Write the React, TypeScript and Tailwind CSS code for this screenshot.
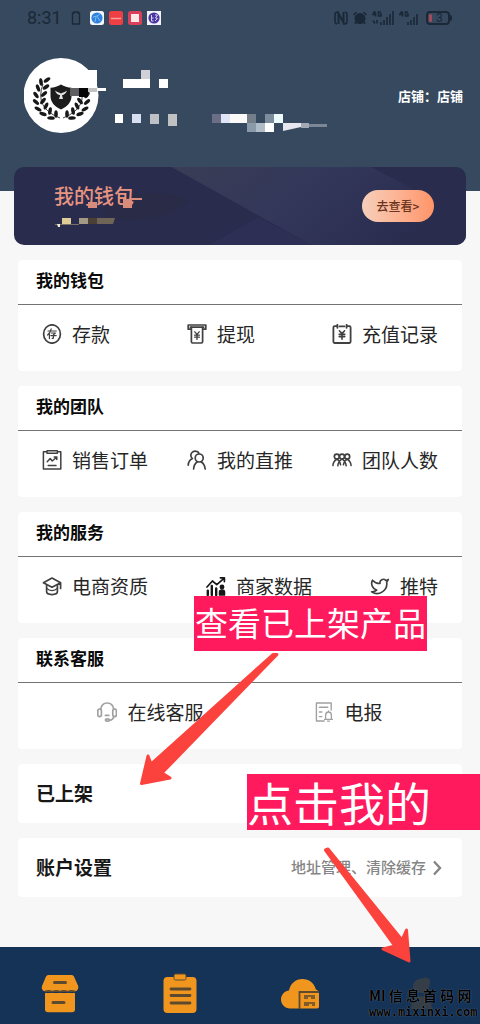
import type { ReactNode } from 'react'
import { AlarmClock, Twitter } from 'lucide-react'

interface MenuItem {
  label: string
  icon: ReactNode
}

interface MenuSection {
  title: string
  align: string
  items: MenuItem[]
}

interface IconProps {
  children: ReactNode
  className?: string
}

function Icon({ children, className = 'text-neutral-700' }: IconProps) {
  return (
    <svg
      viewBox="0 0 20 20"
      fill="none"
      stroke="currentColor"
      strokeWidth="1.7"
      strokeLinecap="round"
      strokeLinejoin="round"
      aria-hidden="true"
      className={`size-5 shrink-0 ${className}`}
    >
      {children}
    </svg>
  )
}

const sections: MenuSection[] = [
  {
    title: '我的钱包',
    align: 'justify-between',
    items: [
      {
        label: '存款',
        icon: (
          <Icon>
            <ellipse cx="10" cy="10" rx="8.4" ry="9.2" />
            <path d="M6 7h8.3M9.2 4.8C8.6 7.6 7.4 9.4 5.6 11M7.4 9.6v5M9.4 9h4l-2 1.8v3.4l-1.2.2M8.8 11.6h5.4" strokeWidth="1.2" />
          </Icon>
        ),
      },
      {
        label: '提现',
        icon: (
          <Icon>
            <path d="M3.6 5.2H1.2V1h17.6v4.2h-2.4M3.4 3.2h13.2" />
            <path d="M4.4 3.4v14.4c0 .8.4 1.2 1.2 1.2h8.8c.8 0 1.2-.4 1.2-1.2V3.4" />
            <path d="M7.8 7.8L10 10.4l2.2-2.6M10 10.4v5M7.6 11.2h4.8M7.6 13.2h4.8" strokeWidth="1.3" />
          </Icon>
        ),
      },
      {
        label: '充值记录',
        icon: (
          <Icon>
            <path d="M5 2.2H2.6c-.8 0-1.2.4-1.2 1.2v14.4c0 .8.4 1.2 1.2 1.2h14.8c.8 0 1.2-.4 1.2-1.2V3.4c0-.8-.4-1.2-1.2-1.2H15M5.4.8v3M14.6.8v3M7.6 2.4h4.8" strokeWidth="1.8" />
            <path d="M7.4 6.8L10 9.6l2.6-2.8M10 9.6v5.6M7.2 10.4h5.6M7.2 12.6h5.6" strokeWidth="1.6" />
          </Icon>
        ),
      },
    ],
  },
  {
    title: '我的团队',
    align: 'justify-between',
    items: [
      {
        label: '销售订单',
        icon: (
          <Icon>
            <path d="M4.6 1.8H1.4V19h17.4V1.8h-3.2" strokeWidth="1.5" />
            <path d="M5 .8h10.4v2.4H5z" strokeWidth="1.4" />
            <path d="M5.2 11.8l3-3.2 2 2.4 4.4-3.8M12.2 7h2.6v2.4M6.2 15.6h7.8" strokeWidth="1.5" />
          </Icon>
        ),
      },
      {
        label: '我的直推',
        icon: (
          <Icon>
            <circle cx="12.2" cy="8" r="4" />
            <path d="M6.6 19c.2-3.6 1.6-5.8 3.8-7.2M14 11.8c2.4 1.4 3.8 3.6 4.2 7.2" />
            <path d="M9.8 1.6C7.4.4 4 1.8 3.8 5c0 1.6.6 2.8 1.6 3.6C3 9.8 1.4 12 1.2 15.2M10.2 1.6c.8.4 1.2.8 1.6 1.6" />
          </Icon>
        ),
      },
      {
        label: '团队人数',
        icon: (
          <Icon>
            <circle cx="4.8" cy="6.6" r="2.5" />
            <circle cx="10" cy="6.6" r="2.5" />
            <circle cx="15.2" cy="6.6" r="2.5" />
            <path d="M.9 15.6c.3-3 1.4-5.2 3.9-6.4 2 1 3.4 2.8 3.8 5.6M5.8 15.8c.4-3.2 1.8-5.4 4.2-6.6 2.4 1.2 3.8 3.4 4.2 6.6M11.4 14.8c.4-2.8 1.8-4.6 3.8-5.6 2.5 1.2 3.6 3.4 3.9 6.4" strokeWidth="1.5" />
          </Icon>
        ),
      },
    ],
  },
  {
    title: '我的服务',
    align: 'justify-between',
    items: [
      {
        label: '电商资质',
        icon: (
          <Icon>
            <path d="M1.4 6.8L10 2l8.600 4.800L10 11.200zM18.600 6.800v5.600" />
            <path d="M4.600 9.400v6.200c0 1.800 2.400 3 5.400 3s5.400-1.200 5.400-3V9.400" />
            <path d="M4.800 12.400c1.400 1.600 3.200 2.200 5.200 2.200s3.800-.6 5.200-2.200" strokeWidth="1.300" />
          </Icon>
        ),
      },
      {
        label: '商家数据',
        icon: (
          <Icon className="text-neutral-900">
            <path d="M1 11l5.4-6 4.4 3.6L18 2.4M14.4 1.8h4v3.8" strokeWidth="1.7" />
            <path d="M1.8 19v-4.4M5.8 19V10M10.2 19v-6.6" strokeWidth="2.4" />
            <circle cx="16" cy="11" r="1.6" fill="currentColor" />
            <path d="M13.6 19v-3c0-1 1-2 2.4-2s2.4 1 2.4 2v3z" fill="currentColor" />
          </Icon>
        ),
      },
      {
        label: '推特',
        icon: <Twitter className="size-5 shrink-0 text-neutral-700" strokeWidth={2} />,
      },
    ],
  },
  {
    title: '联系客服',
    align: 'justify-around',
    items: [
      {
        label: '在线客服',
        icon: (
          <Icon className="text-neutral-400">
            <path d="M3.6 7.4C4.2 3.6 6.6 1 10.2 1s6 2.6 6.6 6.4M16.8 14.4c-.4 2.4-2 3.8-4.4 4" />
            <rect x=".8" y="7" width="3.6" height="7.6" rx="1.8" />
            <rect x="15.8" y="7" width="3.6" height="7.6" rx="1.8" />
            <ellipse cx="10.4" cy="18" rx="2" ry="1.2" />
            <path d="M8.4 13.4h3.4" />
          </Icon>
        ),
      },
      {
        label: '电报',
        icon: (
          <Icon className="text-neutral-400">
            <path d="M10.2 19H2.4V1h14.8v7M5.4 5.2h8.4M5.4 10h2.4M5.4 14.6h2.4" strokeWidth="1.4" />
            <path d="M10.6 17.4h7.8M11.6 17.2v-4c0-1.8 1.2-3.2 2.9-3.2s2.9 1.4 2.9 3.2v4M13.6 19.2h1.8M14.5 9v1" strokeWidth="1.3" />
          </Icon>
        ),
      },
    ],
  },
]

const tabs = [
  {
    label: '店铺',
    icon: (
      <svg viewBox="0 0 38 38" className="size-[38px]" aria-hidden="true">
        <path d="M8 0h22c1.600 0 2.600.6 3.200 2l4 9c.6 3-1 5.400-4 5.400H5c-3.200 0-4.800-2.400-4-5.400l3.800-9C5.400.6 6.400 0 8 0z" fill="#f0961f" />
        <path d="M4 18h30v16c0 2.200-1 3.200-3.200 3.200H7.200C5 37.200 4 36.200 4 34z" fill="#f0961f" />
        <path d="M13.500 7.500h11M12 27.500h11" stroke="#5c4a30" strokeWidth="3" strokeLinecap="round" />
        <path d="M4 16.600q4-1.600 7.500.2q4-1.800 7.500 0q4-1.800 7.500 0q4-1.800 7.500-.2" fill="none" stroke="#5c4a30" strokeWidth="1.600" />
      </svg>
    ),
  },
  {
    label: '订单',
    icon: (
      <svg viewBox="0 0 38 38" className="size-[38px] overflow-visible" aria-hidden="true">
        <rect x="2.500" y="2" width="33" height="36" rx="4" fill="#f0961f" />
        <rect x="13" y="-1" width="12" height="6" rx="1.500" fill="#f0961f" stroke="#5c4a30" />
        <path d="M10 14h19M10 20.500h19M10 28h19" stroke="#5c4a30" strokeWidth="2.800" strokeLinecap="round" />
      </svg>
    ),
  },
  {
    label: '云仓',
    icon: (
      <svg viewBox="0 0 38 38" className="h-[38px] w-10" aria-hidden="true">
        <path d="M9 33.500C4 33.500 0 29.500 0 24.600c0-4.800 3.400-8.400 8-9C9.400 8.600 14.600 4 21.500 4c6.500 0 11.600 4 13.300 10.200l3.200 2.400v15c0 1.200-.7 1.900-2 1.900z" fill="#f0961f" />
        <path d="M18.500 34V17H38" fill="none" stroke="#5c4a30" strokeWidth="1.800" />
        <path d="M23 23h4M30 23h4M23 30h5M31 30h3M23 21h11M23 28h11" stroke="#5c4a30" strokeWidth="1.600" />
      </svg>
    ),
  },
  {
    label: '我的',
    icon: (
      <svg viewBox="0 0 38 38" className="size-[38px]" aria-hidden="true">
        <path d="M12 10c1-5 6-6 10-7 4-1 7 0 7 3 0 6-2 12-8 12-6 0-10-3-9-8z" fill="#353d47" />
        <path d="M10 34c0-8 4-13 10-13s11 5 11 13z" fill="#353d47" />
      </svg>
    ),
  },
]

// one side of the wreath: [x, y, rotation]
const leaves = [
  [47, 80, 55], [41, 82, -8],
  [46, 87, 52], [38, 88, -20],
  [44, 94, 48], [36, 95, -35],
  [43, 101, 40], [36, 102, -48],
  [46, 106, 25], [38, 109, -60],
  [50, 111, 10], [43, 114, -72],
  [56, 114, 0], [51, 118, -88],
]

// name and account number are masked by mosaic tiles: [x, y, width, height, colour]
const profileTiles: [number, number, number, number, string][] = [
  [79, 70, 18, 18, '#ffffff'],
  [70, 88, 9, 8, '#5f5f61'],
  [79, 88, 9, 9, '#050505'],
  [88, 88, 9, 4, '#c2c2c2'],
  [97, 88, 9, 3, '#ffffff'],
  [123, 79, 27, 9, '#ffffff'],
  [141, 70, 9, 9, '#cfd0d8'],
  [159, 79, 9, 9, '#ffffff'],
  [115, 114, 8, 9, '#ffffff'],
  [132, 114, 9, 9, '#d6e0f0'],
  [150, 114, 9, 10, '#bfc0c5'],
  [168, 114, 9, 12, '#c0c2c2'],
  [212, 114, 9, 9, '#6a6f87'],
  [221, 114, 9, 9, '#dfe5f5'],
  [230, 114, 17, 9, '#fbfaf9'],
  [247, 114, 9, 9, '#747e89'],
  [265, 114, 9, 9, '#7c8c9c'],
  [274, 114, 9, 9, '#ecfafc'],
  [247, 123, 9, 9, '#8b9aa8'],
  [256, 123, 9, 9, '#aebdc8'],
  [265, 123, 9, 9, '#ffffff'],
  [301, 123, 8, 5, '#a2a8b4'],
  [309, 124, 18, 3, '#7b8796'],
]

function Branch() {
  return (
    <g fill="#181818">
      <path d="M43 84Q34 108 60 118" fill="none" stroke="#181818" strokeWidth="0.8" />
      {leaves.map(([x, y, angle]) => (
        <ellipse
          key={`${x}-${y}`}
          cx={x}
          cy={y}
          rx="1.8"
          ry="3.8"
          transform={`rotate(${angle} ${x} ${y})`}
        />
      ))}
    </g>
  )
}

function StatusBar() {
  return (
    <div className="flex h-9 items-center justify-between pr-7 pl-[27px] text-[#1b2838]">
      <div className="flex items-center gap-[5px]">
        <span className="mr-1 font-[Roboto] text-[18px] leading-6">8:31</span>
        <svg viewBox="0 0 10 14" className="mr-1 h-[14px] w-[10px]" aria-hidden="true">
          <path d="M3 2V1h4v1h1.500v11h-7V2z" fill="none" stroke="currentColor" strokeWidth="1.400" />
        </svg>
        <svg viewBox="0 0 14 14" className="size-[14px]" aria-hidden="true">
          <rect width="14" height="14" rx="2.500" fill="#f4f8fc" />
          <circle cx="7" cy="7" r="5.600" fill="#2d83dd" />
          <path d="M3 6l4-1 3 5M7 5l3-2M5 11l1-5" fill="none" stroke="#7db9f3" />
        </svg>
        <svg viewBox="0 0 14 14" className="size-[14px]" aria-hidden="true">
          <rect width="14" height="14" rx="2.500" fill="#ee3f45" />
          <path d="M2 7.500h10" stroke="#f8a49c" strokeWidth="1.400" />
        </svg>
        <svg viewBox="0 0 14 14" className="size-[14px]" aria-hidden="true">
          <rect width="14" height="14" rx="2.500" fill="#d9415a" />
          <rect x="3" y="3" width="8" height="8" fill="#fbe9ea" />
        </svg>
        <svg viewBox="0 0 14 14" className="size-[14px]" aria-hidden="true">
          <rect width="14" height="14" fill="#f3f1fa" />
          <circle cx="7" cy="7" r="5.600" fill="#4a36a0" />
          <path d="M4.500 4v6h2M4.500 7h2M8 4h2.500L8.500 7l2 .5L8 10" fill="none" stroke="#d9d2f5" />
        </svg>
      </div>
      <div className="flex items-center gap-[5px]">
        <svg viewBox="0 0 14 14" className="size-[14px]" aria-hidden="true">
          <path d="M5 1.200H3Q1 1.200 1 3.500v7q0 2.300 2 2.300M9 12.800h2q2 0 2-2.300v-7q0-2.300-2-2.300" fill="none" stroke="currentColor" strokeWidth="1.600" />
          <path d="M4.500 13V2.500l5 9V1" fill="none" stroke="currentColor" strokeWidth="2" />
        </svg>
        <AlarmClock className="size-[14px]" strokeWidth={3} fill="currentColor" />
        <svg viewBox="0 0 22 14" className="h-[14px] w-[22px]" aria-hidden="true">
          <path d="M3 0L.8 3.500h3.400M3.500 1v4.500M9 1H6.500v4H9V3H8M1 9.500l2 3M5 9v3.500M9 11v3M12 9v5M15 6v8M18 3v11M21 0v14" fill="none" stroke="currentColor" strokeWidth="1.600" />
        </svg>
        <svg viewBox="0 0 22 14" className="h-[14px] w-[22px]" aria-hidden="true">
          <path d="M3 0L.8 3.500h3.400M3.500 1v4.500M9 1H6.500v4H9V3H8M9 11v3M12 9v5M15 6v8M18 3v11" fill="none" stroke="currentColor" strokeWidth="1.600" />
        </svg>
        <div className="flex items-center">
          <span className="flex h-[14px] w-6 items-center gap-1 rounded-[4px] border-2 border-current px-px font-[Roboto] text-[12px] leading-3">
            <span className="h-2 w-[3px] rounded-xs bg-[#a64a5a]" />3
          </span>
          <span className="h-[6px] w-[2px] rounded-r-sm bg-current" />
        </div>
      </div>
    </div>
  )
}

function Profile() {
  return (
    <div className="flex items-center justify-between pt-[22px] pr-[17px] pb-[57px] pl-6">
      <svg viewBox="24 58 304 76" className="h-[76px] w-[304px]" role="img" aria-label="头像">
        <circle cx="61" cy="95.500" r="37.500" fill="#ffffff" />
        <Branch />
        <g transform="matrix(-1 0 0 1 123 0)">
          <Branch />
        </g>
        <path d="M72 70h22v19H72z" fill="#ffffff" />
        <path d="M61 84.500c3 2 7 3 10.500 3.200V96c0 6-4 10.500-10.500 13.500C54.500 106.500 50.500 102 50.500 96v-8.300C54 87.500 58 86.500 61 84.500z" fill="#1c1c1c" />
        <path d="M55 90.500c1 3 3 4.500 5.200 4.800L59 99h4l-1-3.700c2.200-.3 4-2 5-4.800-2 1.500-4 2-6 3-2-1-4-1.500-6-3z" fill="#e4e4e4" />
        {profileTiles.map(([x, y, width, height, fill]) => (
          <rect key={`${x}-${y}`} x={x} y={y} width={width} height={height} fill={fill} />
        ))}
        <path d="M283 123h18v4l-18 4z" fill="#e6e6f0" />
      </svg>
      <p className="shrink-0 text-[13px] leading-5 font-bold text-white">店铺：店铺</p>
    </div>
  )
}

function WalletBanner() {
  return (
    <section className="relative mx-[14px] -mt-6 flex h-[78px] items-center justify-between overflow-hidden rounded-[10px] bg-[#292c4d] pr-8 pl-10">
      <svg viewBox="0 0 453 78" preserveAspectRatio="none" className="absolute inset-0 size-full" aria-hidden="true">
        <defs>
          <linearGradient id="facet" x1="0" x2="1" y1="0" y2="0.3">
            <stop offset="0" stopColor="#3a3d55" />
            <stop offset="0.5" stopColor="#33375a" />
            <stop offset="1" stopColor="#292c4d" />
          </linearGradient>
        </defs>
        <path d="M158 0h200l95 50v28H298z" fill="url(#facet)" />
        <path d="M195 78l50-28 53 28z" fill="#2d2f55" />
        <path d="M90 35q60-18 85 0q-30 22-85 18z" fill="#292b47" />
      </svg>
      <div className="relative flex flex-col gap-2">
        <h1 className="text-[20px] leading-6 font-medium text-[#e79482]">我的钱包</h1>
        <svg viewBox="0 0 64 12" className="h-3 w-16" aria-hidden="true">
          <path d="M8 2h9v6H8z" fill="#e1cc98" />
          <path d="M25 2h9v6h-9z" fill="#a39a85" />
          <path d="M34 2h9v6h-9z" fill="#4c3f36" />
          <path d="M43 2h18l-2 6H43z" fill="#6f6556" />
          <path d="M1 8h24v1H1z" fill="#78716b" />
          <path d="M3 8h3v3H4z" fill="#f4ead0" />
        </svg>
        <svg viewBox="0 0 90 12" className="absolute top-3 left-0 h-3 w-[90px]" aria-hidden="true">
          <path d="M34 6h9v6h-9zM69 3h9v9h-9zM76 2h12v2H76z" fill="#d98b7c" />
        </svg>
      </div>
      <button
        type="button"
        className="relative h-8 w-[72px] rounded-full bg-linear-to-r from-[#f6cfbb] to-[#ff9468] text-[12px] font-medium text-[#6b3420]"
      >
        去查看&gt;
      </button>
    </section>
  )
}

function SectionCard({ title, align, items }: MenuSection) {
  return (
    <section className="rounded-sm bg-white">
      <h2 className="border-b border-neutral-500 px-[18px] pt-2 pb-3 text-[17px] leading-6 font-bold text-neutral-950">
        {title}
      </h2>
      <div className={`flex px-6 pt-4 pb-6 ${align}`}>
        {items.map((item) => (
          <button
            key={item.label}
            type="button"
            className="flex items-center gap-[10px] text-[19px] leading-[26px] text-neutral-800"
          >
            {item.icon}
            {item.label}
          </button>
        ))}
      </div>
    </section>
  )
}

function TabBar() {
  return (
    <nav className="mt-auto grid h-[77px] grid-cols-4 bg-[#143357] pt-7">
      {tabs.map((tab) => (
        <button key={tab.label} type="button" aria-label={tab.label} className="flex items-start justify-center">
          {tab.icon}
        </button>
      ))}
    </nav>
  )
}

function Annotations() {
  return (
    <>
      <p className="absolute top-[596px] left-[194px] h-[55px] bg-[#ff1a5e] px-px text-[33px] leading-[53px] font-normal whitespace-nowrap text-white">
        查看已上架产品
      </p>
      <p className="absolute top-[774px] right-0 left-[247px] h-14 bg-[#ff1a5e] text-[46px] leading-[54px] font-normal whitespace-nowrap text-white">
        点击我的
      </p>
      <svg
        viewBox="0 0 290 320"
        className="pointer-events-none absolute top-[648px] left-[134px] h-[320px] w-[290px]"
        aria-hidden="true"
      >
        <g fill="#fb423d" stroke="#fb423d" strokeWidth="3" strokeLinejoin="round">
          <path d="M139 6.500h4L28 125l8 5-28.500 5.500L14 108l3 8z" />
          <path d="M191.500 202l2.500-1 74 91 4.500-10 2.500 31-26-12 12-3z" />
        </g>
      </svg>
      <div className="pointer-events-none absolute top-[985px] right-[3px] w-[108px] font-bold whitespace-nowrap text-black [text-shadow:0_0_1px_#8a96a3]">
        <p className="text-[14px] leading-5">MI 信 息 首 码 网</p>
        <p className="font-['DejaVu_Sans_Mono'] text-[12px] leading-[14px]">www.mixinxi.com</p>
      </div>
    </>
  )
}

export default function App() {
  return (
    <div className="relative flex min-h-screen flex-col overflow-hidden bg-[#f7f7f7] font-['Noto_Sans_CJK_SC',sans-serif]">
      <header className="bg-[#36495e]">
        <StatusBar />
        <Profile />
      </header>
      <WalletBanner />
      <main className="flex flex-col gap-[15px] px-[18px] pt-[15px] pb-[50px]">
        {sections.map((section) => (
          <SectionCard key={section.title} {...section} />
        ))}
        <button
          type="button"
          className="flex h-[59px] items-center rounded-sm bg-white px-[18px] text-[19px] font-bold text-neutral-900"
        >
          已上架
        </button>
        <button
          type="button"
          className="flex h-[59px] items-center justify-between rounded-sm bg-white pr-5 pl-[18px] text-[19px] font-bold text-neutral-900"
        >
          账户设置
          <span className="flex items-center gap-[6px] text-[15px] font-medium text-[#858585]">
            地址管理、清除缓存
            <svg viewBox="0 0 10 16" className="h-4 w-[10px]" aria-hidden="true">
              <path d="M2 1.500L8 8l-6 6.500" fill="none" stroke="currentColor" strokeWidth="2.400" />
            </svg>
          </span>
        </button>
      </main>
      <TabBar />
      <Annotations />
    </div>
  )
}
